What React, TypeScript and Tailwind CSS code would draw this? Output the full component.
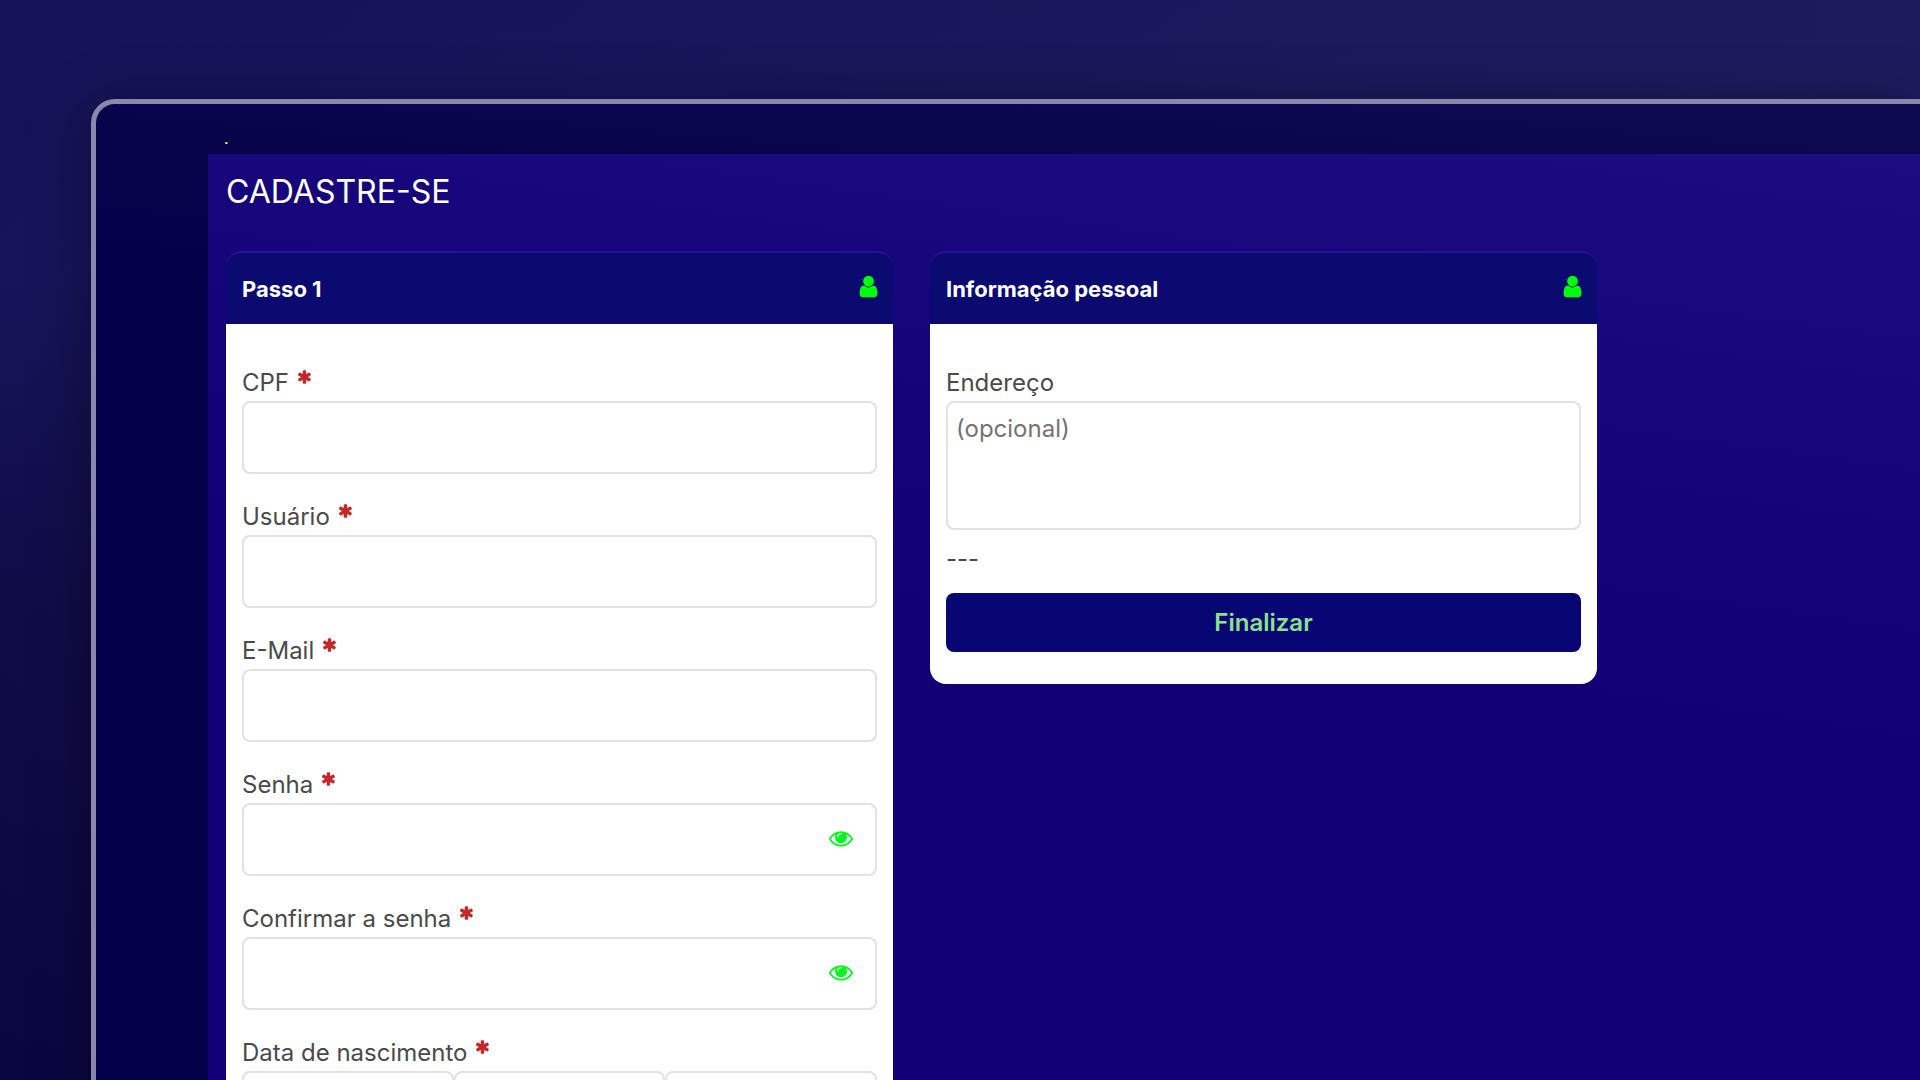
import { useId, type ReactNode } from "react";

const USER_PATH =
  "M1536 1399q0 109-62.5 187t-150.5 78h-854q-88 0-150.5-78t-62.5-187q0-85 8.5-160.5t31.5-152 58.5-131 94-89 134.5-34.5q131 128 313 128t313-128q76 0 134.5 34.5t94 89 58.5 131 31.5 152 8.5 160.5zm-256-887q0 159-112.5 271.5t-271.5 112.5-271.5-112.5-112.5-271.5 112.5-271.5 271.5-112.5 271.5 112.5 112.5 271.5z";
const ASTERISK_PATH =
  "M1482 1050q46 26 59.5 77.5t-12.5 97.5l-64 110q-26 46-77.5 59.5t-97.5-12.5l-266-153v307q0 52-38 90t-90 38h-128q-52 0-90-38t-38-90v-307l-266 153q-46 26-97.5 12.5t-77.5-59.5l-64-110q-26-46-12.5-97.5t59.5-77.5l266-154-266-154q-46-26-59.5-77.5t12.5-97.5l64-110q26-46 77.5-59.5t97.5 12.5l266 153v-307q0-52 38-90t90-38h128q52 0 90 38t38 90v307l266-153q46-26 97.5-12.5t77.5 59.5l64 110q26 46 12.5 97.5t-59.5 77.5l-266 154z";
const EYE_PATH =
  "M1664 960q-152-236-381-353 61 104 61 225 0 185-131.5 316.5t-316.5 131.5-316.5-131.5-131.5-316.5q0-121 61-225-229 117-381 353 133 205 333.5 326.5t434.5 121.5 434.5-121.5 333.5-326.5zm-720-384q0-20-14-34t-34-14q-125 0-214.5 89.5t-89.5 214.5q0 20 14 34t34 14 34-14 14-34q0-86 61-147t147-61q20 0 34-14t14-34zm848 384q0 34-20 69-140 230-376.5 368.5t-499.5 138.5-499.5-139-376.5-368q-20-35-20-69t20-69q140-229 376.5-368t499.5-139 499.5 139 376.5 368q20 35 20 69z";

function Glyph({ path, className }: { path: string; className: string }) {
  return (
    <svg viewBox="0 0 1792 1792" fill="currentColor" aria-hidden="true" className={className}>
      <path d={path} />
    </svg>
  );
}

const inputClass =
  "block h-[73px] w-full rounded-lg border-2 border-[#e2e2e2] bg-white px-2 text-2xl text-[#4a4a4a] outline-none";

function Required() {
  return <Glyph path={ASTERISK_PATH} className="mb-3 size-4 text-[#c62828]" />;
}

function Field({ label, type = "text" }: { label: string; type?: string }) {
  const id = useId();
  return (
    <div>
      <label htmlFor={id} className="flex items-center gap-2 text-2xl leading-9">
        {label}
        <Required />
      </label>
      <div className="relative">
        <input id={id} type={type} className={inputClass} />
        {type === "password" && (
          <button
            type="button"
            aria-label="Mostrar senha"
            className="absolute inset-y-0 right-6 flex items-center pb-1 text-[#00f81a]"
          >
            <Glyph path={EYE_PATH} className="size-6" />
          </button>
        )}
      </div>
    </div>
  );
}

function Card({ title, children }: { title: string; children: ReactNode }) {
  return (
    <section className="min-w-0">
      <header className="flex h-[73px] items-center justify-between rounded-t-2xl border-t-2 border-[#2b1295] bg-[#0a0a70] px-4">
        <h2 className="pt-0.5 text-[22px] font-bold text-white">{title}</h2>
        <Glyph path={USER_PATH} className="-mr-1 mb-1 size-[25px] text-[#00ff0a]" />
      </header>
      <div className="rounded-b-2xl bg-white px-4 pt-[41px] pb-8">{children}</div>
    </section>
  );
}

export default function App() {
  const addressId = useId();
  return (
    <div className="h-screen overflow-hidden bg-[linear-gradient(175deg,#151258_0%,#17145a_22%,#100c48_48%,#080440_100%)] font-[Inter,'Liberation_Sans',sans-serif] text-[#4a4a4a]">
      <div className="h-full bg-[linear-gradient(90deg,transparent_0%,rgba(36,34,98,0.5)_100%)] pt-[99px] pl-[91px]">
        <main className="rounded-tl-3xl border-t-[5px] border-l-[5px] border-[#8a87ac] bg-[linear-gradient(185deg,#0d0a50_0px,#08054d_160px,#020048_340px)] pl-28 shadow-[0_10px_60px_rgba(0,0,0,0.4)]">
          <p className="h-[50px] px-4 pt-6 text-base leading-5 text-white">.</p>
          <div className="min-h-screen bg-[linear-gradient(188deg,#1b0c80_0px,#17067b_280px,#110076_580px)] px-[18px]">
            <h1 className="pt-4 text-[32px] leading-[44px] text-white">CADASTRE-SE</h1>
            <form
              className="mt-[37px] grid grid-cols-2 items-start gap-[37px] pr-[305px]"
              onSubmit={(e) => e.preventDefault()}
            >
              <Card title="Passo 1">
                <div className="flex flex-col gap-[25px]">
                  <Field label="CPF" />
                  <Field label="Usuário" />
                  <Field label="E-Mail" type="email" />
                  <Field label="Senha" type="password" />
                  <Field label="Confirmar a senha" type="password" />
                  <fieldset>
                    <legend className="flex items-center gap-2 text-2xl leading-9">
                      Data de nascimento
                      <Required />
                    </legend>
                    <div className="grid grid-cols-3">
                      <input aria-label="Dia" className={inputClass} />
                      <input aria-label="Mês" className={inputClass} />
                      <input aria-label="Ano" className={inputClass} />
                    </div>
                  </fieldset>
                </div>
              </Card>
              <Card title="Informação pessoal">
                <label htmlFor={addressId} className="block text-2xl leading-9">
                  Endereço
                </label>
                <textarea
                  id={addressId}
                  placeholder="(opcional)"
                  className="block h-[129px] w-full resize-none rounded-lg border-2 border-[#e2e2e2] bg-white px-2 py-2 text-2xl leading-9 outline-none placeholder:text-[#737373]"
                />
                <p className="mt-[11px] text-2xl leading-9">---</p>
                <button
                  type="submit"
                  className="mt-4 block h-[59px] w-full rounded-lg bg-[#080672] text-2xl font-semibold text-[#8be28b]"
                >
                  Finalizar
                </button>
              </Card>
            </form>
          </div>
        </main>
      </div>
    </div>
  );
}
